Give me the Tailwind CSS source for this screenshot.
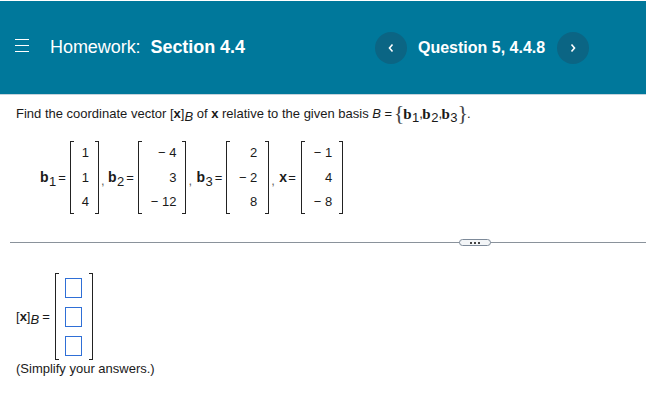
<!DOCTYPE html>
<html lang="en">
<head>
    <meta charset="UTF-8">
    <title>Homework: Section 4.4</title>
    <script src="https://cdn.jsdelivr.net/npm/@tailwindcss/browser@4"></script>
</head>
<body class="bg-white w-[646px] h-[409px] overflow-hidden font-['Liberation_Sans',Arial,sans-serif] text-[#1a1a1a]">
    <!-- header -->
    <header class="mt-px h-[93px] bg-[#00789b] border-b border-[#c5d3dc] box-content flex items-center text-white">
        <svg class="ml-[14px] w-[16px] h-[13px] -translate-y-[2px]" viewBox="0 0 16 13" fill="none" stroke="white" stroke-width="1.2">
            <path d="M1 .5h14M1 6.5h14M1 12.5h14"/>
        </svg>
        <div class="ml-[20px] w-[325px] text-[18px] leading-none whitespace-nowrap -translate-y-px tracking-[-0.05px]">Homework:&nbsp; <span class="font-bold">Section 4.4</span></div>
        <button class="w-[32px] h-[32px] rounded-full bg-[#0b6584] flex items-center justify-center">
            <svg class="w-[8px] h-[10px]" viewBox="0 0 8 10" fill="none" stroke="white" stroke-width="1.6"><path d="M5.5 1.5 2.5 5l3 3.5"/></svg>
        </button>
        <div class="ml-[11px] w-[127px] text-[16px] font-bold leading-none whitespace-nowrap">Question 5, 4.4.8</div>
        <button class="ml-[12px] w-[32px] h-[32px] rounded-full bg-[#0b6584] flex items-center justify-center">
            <svg class="w-[8px] h-[10px]" viewBox="0 0 8 10" fill="none" stroke="white" stroke-width="1.6"><path d="M2.5 1.5 5.5 5l-3 3.5"/></svg>
        </button>
    </header>

    <!-- question text -->
    <p class="ml-[16px] mt-[9px] h-[20px] flex items-center text-[13px] whitespace-pre">
        <span>Find the coordinate vector [<b>x</b>]<i class="inline-block translate-y-[3px]">B</i> of <b>x</b> relative to the given basis <i>B</i> =</span>
        <span class="text-[22px] font-['Liberation_Serif',serif] leading-none ml-[1.5px] -mr-px text-[#444] -translate-y-px">{</span>
        <b class="font-['Liberation_Serif',serif] text-[15px]">b</b><span class="text-[13px] translate-y-[4px] ml-[0.5px]">1</span><span class="w-[3px]">,</span>
        <b class="font-['Liberation_Serif',serif] text-[15px]">b</b><span class="text-[13px] translate-y-[4px] ml-[0.5px]">2</span><span class="w-[3px]">,</span>
        <b class="font-['Liberation_Serif',serif] text-[15px]">b</b><span class="text-[13px] translate-y-[4px] ml-[0.5px]">3</span>
        <span class="text-[22px] font-['Liberation_Serif',serif] leading-none text-[#444] -translate-y-px">}</span><span class="-ml-px">.</span>
    </p>

    <!-- given vectors -->
    <div class="ml-[40px] mt-[17px] flex items-center text-[13px] h-[73px] whitespace-nowrap">
        <b class="text-[14px]">b</b><span class="translate-y-[4px] ml-[0.5px]">1</span><span class="ml-[2px]">=</span>
        <div class="ml-[4px] w-[29px] h-[73px] relative grid grid-rows-3 items-center justify-items-end pr-[10px]">
            <span class="absolute left-0 inset-y-0 w-[4px] border border-r-0 border-[#222]"></span>
            <span class="absolute right-0 inset-y-0 w-[4px] border border-l-0 border-[#222]"></span>
            <span>1</span><span>1</span><span>4</span>
        </div>
        <span class="ml-[2px] mr-[3.5px] translate-y-[3px] text-[#666]">,</span>

        <b class="text-[14px]">b</b><span class="translate-y-[4px] ml-[0.5px]">2</span><span class="ml-[2px]">=</span>
        <div class="ml-[4.5px] w-[48px] h-[73px] relative grid grid-rows-3 items-center justify-items-end pr-[10px]">
            <span class="absolute left-0 inset-y-0 w-[4px] border border-r-0 border-[#222]"></span>
            <span class="absolute right-0 inset-y-0 w-[4px] border border-l-0 border-[#222]"></span>
            <span>− 4</span><span>3</span><span>− 12</span>
        </div>
        <span class="ml-[2px] mr-[4.4px] translate-y-[3px] text-[#666]">,</span>

        <b class="text-[14px]">b</b><span class="translate-y-[4px] ml-[0.5px]">3</span><span class="ml-[2px]">=</span>
        <div class="ml-[4px] w-[43px] h-[73px] relative grid grid-rows-3 items-center justify-items-end pr-[12px]">
            <span class="absolute left-0 inset-y-0 w-[4px] border border-r-0 border-[#222]"></span>
            <span class="absolute right-0 inset-y-0 w-[4px] border border-l-0 border-[#222]"></span>
            <span>2</span><span>− 2</span><span>8</span>
        </div>
        <span class="ml-[2px] mr-[4.4px] translate-y-[3px] text-[#666]">,</span>

        <b class="text-[14px]">x</b><span class="ml-px">=</span>
        <div class="ml-[5.4px] w-[42px] h-[73px] relative grid grid-rows-3 items-center justify-items-end pr-[11px]">
            <span class="absolute left-0 inset-y-0 w-[4px] border border-r-0 border-[#222]"></span>
            <span class="absolute right-0 inset-y-0 w-[4px] border border-l-0 border-[#222]"></span>
            <span>− 1</span><span>4</span><span>− 8</span>
        </div>
    </div>

    <!-- divider -->
    <div class="relative mt-[28px] ml-[10px] h-px bg-[#8a929b]">
        <div class="absolute left-[449px] top-[-3px] w-[32px] h-[7px] rounded-full border border-[#7d8a99] bg-[#f3f5f7] flex items-center justify-center gap-[2px]">
            <span class="w-[2px] h-[2px] bg-[#444]"></span><span class="w-[2px] h-[2px] bg-[#444]"></span><span class="w-[2px] h-[2px] bg-[#444]"></span>
        </div>
    </div>

    <!-- answer -->
    <div class="ml-[16px] mt-[30px] flex items-center text-[13px] whitespace-nowrap">
        <span>[<b>x</b>]<i class="inline-block translate-y-[3px]">B</i></span><span class="ml-[3px]">=</span>
        <div class="ml-[5px] w-[38px] h-[87px] relative flex flex-col items-center justify-center gap-[9px]">
            <span class="absolute left-0 inset-y-0 w-[4px] border border-r-0 border-[#222]"></span>
            <span class="absolute right-0 inset-y-0 w-[4px] border border-l-0 border-[#222]"></span>
            <span class="w-[17px] h-[20px] border border-[#2f6fd6]"></span>
            <span class="w-[17px] h-[20px] border border-[#2f6fd6]"></span>
            <span class="w-[17px] h-[20px] border border-[#2f6fd6]"></span>
        </div>
    </div>
    <p class="ml-[16px] mt-[1px] text-[13px] leading-[16px]">(Simplify your answers.)</p>
</body>
</html>
